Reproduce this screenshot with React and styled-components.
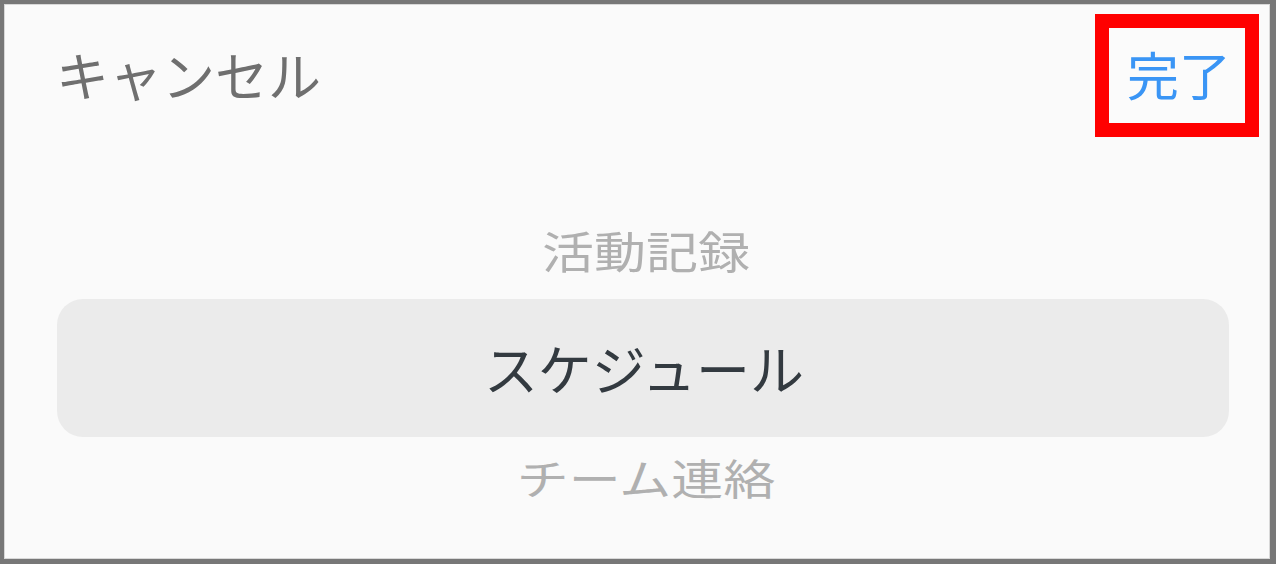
import React from "react";
import styled, { createGlobalStyle } from "styled-components";

const Global = createGlobalStyle`
  html, body { margin: 0; padding: 0; background: #ffffff; }
  * { box-sizing: border-box; }
`;

const Frame = styled.div`
  width: 1276px;
  height: 564px;
  border: 4px solid #777777;
  border-right-width: 6px;
  border-bottom-width: 5px;
  background: #fafafa;
  box-shadow: inset 0 0 0 1px #d8d8d8;
  font-family: "Noto Sans CJK JP", "Noto Sans", sans-serif;
  display: flex;
  flex-direction: column;
`;

const Header = styled.div`
  height: 146px;
  display: flex;
  align-items: center;
  justify-content: space-between;
  padding: 0 11px 0 52px;
`;

const CancelButton = styled.span`
  font-size: 53px;
  line-height: 1;
  color: #6f6f6f;
  margin-top: -6px;
`;

const DoneButton = styled.span`
  border: 14px solid #ff0000;
  padding: 20px 14px 23px 18px;
  font-size: 52px;
  line-height: 1;
  color: #3a95f5;
  background: #fbfbfb;
  margin-top: -3px;
`;

const Picker = styled.div`
  display: flex;
  flex-direction: column;
  align-items: stretch;
  padding: 60px 41px 0 53px;
`;

const Item = styled.div`
  height: 80px;
  display: flex;
  align-items: center;
  justify-content: center;
  font-size: 52px;
  line-height: 1;
  color: #b0b0b0;
  transform: scaleY(${(p) => p.$squash});
  margin-bottom: ${(p) => p.$gap || 0}px;
  padding-left: 6px;
`;

const Selected = styled.div`
  height: 138px;
  border-radius: 26px;
  background: #ebebeb;
  display: flex;
  align-items: center;
  justify-content: center;
  font-size: 54px;
  line-height: 1;
  color: #333a40;
  padding-left: 2px;
`;

export default function App() {
  return (
    <>
      <Global />
      <Frame>
        <Header>
          <CancelButton>キャンセル</CancelButton>
          <DoneButton>完了</DoneButton>
        </Header>
        <Picker>
          <Item $squash={0.86} $gap={9}>活動記録</Item>
          <Selected>スケジュール</Selected>
          <Item $squash={0.8}>チーム連絡</Item>
        </Picker>
      </Frame>
    </>
  );
}
